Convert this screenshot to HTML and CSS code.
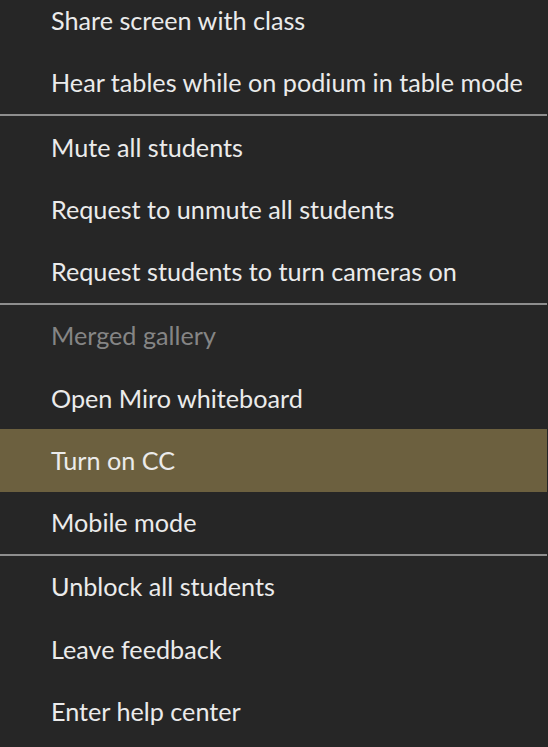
FILE: index.html
```html
<!DOCTYPE html>
<html>
<head>
<meta charset="utf-8">
<link rel="stylesheet" href="styles.css">
</head>
<body>
<ul class="menu">
  <li class="item">Share screen with class</li>
  <li class="item">Hear tables while on podium in table mode</li>
  <li class="divider"></li>
  <li class="item">Mute all students</li>
  <li class="item">Request to unmute all students</li>
  <li class="item">Request students to turn cameras on</li>
  <li class="divider"></li>
  <li class="item disabled">Merged gallery</li>
  <li class="item">Open Miro whiteboard</li>
  <li class="item active">Turn on CC</li>
  <li class="item">Mobile mode</li>
  <li class="divider"></li>
  <li class="item">Unblock all students</li>
  <li class="item">Leave feedback</li>
  <li class="item">Enter help center</li>
</ul>
</body>
</html>
```
FILE: styles.css
```css
html, body {
  margin: 0;
  padding: 0;
  background: #262626;
  height: 100%;
  overflow: hidden;
}
.menu {
  list-style: none;
  margin: -10.5px 0 0 0;
  padding: 0;
  width: 547px;
  font-family: Lato, "Noto Sans", sans-serif;
  font-size: 25.2px;
  color: #ebebeb;
}
.item {
  height: 62.25px;
  display: flex;
  align-items: center;
  padding-left: 51px;
  padding-bottom: 1px;
  box-sizing: border-box;
  white-space: nowrap;
}
.item.disabled {
  color: #858585;
}
.item.active {
  background: #6c603f;
}
.divider {
  height: 2px;
  background: #8e8e8e;
}
```
